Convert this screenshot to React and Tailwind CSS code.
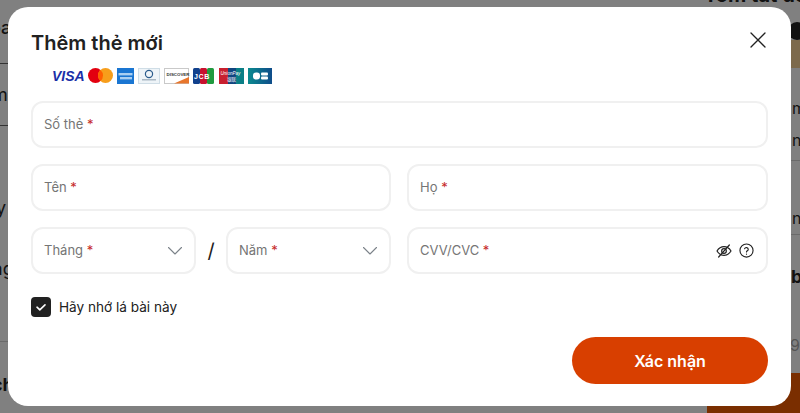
import React from 'react'

function Star() {
    return <span className="text-[#c62828]">*</span>
}

function Chevron() {
    return (
        <svg className="w-[14px] h-[14px] text-[#7b8289]" viewBox="0 0 14 14" fill="none" stroke="currentColor" strokeWidth="1.1">
            <path d="M0.5 3.5l6.5 6.5 6.5-6.5" strokeLinecap="round" strokeLinejoin="round" />
        </svg>
    )
}

function Field({ label, className = '', children }) {
    return (
        <div className={`h-[47px] flex items-center justify-between pl-[11px] pr-3 bg-white border-2 border-[#f0f0f0] rounded-xl text-[13px] text-[#757575] ${className}`}>
            <span>{label} <Star /></span>
            {children}
        </div>
    )
}

function CardLogos() {
    return (
        <div className="flex items-center h-4 ml-[21px] mt-3">
            <svg width="241" height="16" viewBox="0 0 241 16">
                <text x="0" y="12.5" fontFamily="Liberation Sans, sans-serif" fontSize="14" fontWeight="700" fontStyle="italic" fill="#1a2fa8">VISA</text>
                <circle cx="43.5" cy="7.5" r="7.5" fill="#e3000f" />
                <circle cx="53.5" cy="7.5" r="7.5" fill="#f79e1b" />
                <path d="M48.5 1.9a7.5 7.5 0 0 1 0 11.2a7.5 7.5 0 0 1 0-11.2z" fill="#ff5f00" />

                <rect x="65" y="0" width="17" height="16" fill="#1a76d2" />
                <rect x="66.5" y="5" width="14" height="2.4" fill="#a9cff2" />
                <rect x="68" y="9" width="12" height="2.4" fill="#a9cff2" />

                <rect x="86.5" y="0.5" width="21" height="15" fill="#eef4f8" stroke="#cfdde6" />
                <circle cx="97" cy="6" r="3.6" fill="none" stroke="#2a5b8c" strokeWidth="1.2" />
                <rect x="90" y="11" width="14" height="1.5" fill="#a9b8c4" />

                <rect x="112.5" y="0.5" width="24" height="15" fill="#ffffff" stroke="#c9c9c9" />
                <text x="114.5" y="7.5" fontFamily="Liberation Sans, sans-serif" fontSize="4.4" fontWeight="700" fill="#333333">DISCOVER</text>
                <path d="M122 15.5L137 9v6.5z" fill="#e8762c" />

                <rect x="141" y="0" width="7" height="16" rx="1.5" fill="#11408c" />
                <rect x="148" y="0" width="7" height="16" rx="1.5" fill="#c8102e" />
                <rect x="155" y="0" width="7" height="16" rx="1.5" fill="#1f9a3f" />
                <text x="142" y="11" fontFamily="Liberation Sans, sans-serif" fontSize="7" fontWeight="700" fill="#ffffff" letterSpacing="0.6">JCB</text>

                <path d="M167 0h9v16h-9z" fill="#c8202f" />
                <path d="M176 0h8v16h-8z" fill="#10457f" />
                <path d="M184 0h8v16h-8z" fill="#0a7f86" />
                <text x="168.5" y="7" fontFamily="Liberation Sans, sans-serif" fontSize="4.6" fontStyle="italic" fill="#ffffff">UnionPay</text>
                <text x="175" y="13" fontFamily="Noto Sans CJK SC, sans-serif" fontSize="4.6" fill="#ffffff">银联</text>

                <defs>
                    <linearGradient id="cb" x1="0" y1="0" x2="1" y2="0">
                        <stop offset="0" stopColor="#0b8a8f" />
                        <stop offset="1" stopColor="#0f4c8a" />
                    </linearGradient>
                </defs>
                <rect x="196" y="0" width="24" height="16" fill="url(#cb)" />
                <rect x="201" y="4.5" width="7" height="7" rx="3" fill="#ffffff" />
                <rect x="209" y="4.5" width="7" height="3" rx="1" fill="#ffffff" />
                <rect x="209" y="8.5" width="7" height="3" rx="1" fill="#ffffff" />
            </svg>
        </div>
    )
}

// what shows of the checkout page behind the dimmed backdrop
function PageBehind() {
    return (
        <div className="h-full bg-[#808080] overflow-hidden flex justify-between text-[#111111] text-lg">
            <div className="w-2 flex flex-col whitespace-nowrap">
                <div className="h-[64px] flex items-start pt-[14px] border-b border-[#333333] font-medium -ml-2.5">oa</div>
                <div className="h-[62px] flex items-center border-b border-[#333333] -ml-2">m</div>
                <div className="h-[216px] flex flex-col gap-[33px] pt-[68px] border-b border-[#6a6a6a]">
                    <span className="-ml-1">y</span>
                    <span className="-ml-2">ng</span>
                </div>
                <div className="pt-[29px] font-bold -ml-2">ch</div>
            </div>

            <div className="w-[96px] flex flex-col whitespace-nowrap">
                <div className="h-[8px] flex items-end font-bold text-xl leading-[26px]">Tóm tắt đơn</div>
                <div className="h-[60px] pl-[84px] pt-[14px]">
                    <div className="w-[18px] h-[18px] rounded-full bg-[#111111]" />
                    <div className="w-3 h-[28px] bg-[#7d6a4c]" />
                </div>
                <div className="h-[93px] pl-[88px] pt-[24px] text-base leading-[32px] border-b border-[#6a6a6a] flex flex-col">
                    <span>m</span>
                    <span>n</span>
                </div>
                <div className="h-[74px] pl-[88px] pt-[45px] text-base border-b border-[#6a6a6a]">n</div>
                <div className="h-[69px] pl-[87px] pt-[28px] font-bold">b</div>
                <div className="h-[69px] pl-[86px] pt-[29px] text-base text-[#555555]">99</div>
                <div className="flex-1 ml-[3px] rounded-tl-lg bg-[#7a2e00]" />
            </div>
        </div>
    )
}

export default function App() {
    return (
        <div className="relative w-[800px] h-[413px] overflow-hidden font-['Inter',sans-serif]">
            <PageBehind />
            <div className="absolute inset-0 pl-2 pr-[9px] py-[7px]">
                <div className="relative h-full bg-white rounded-[20px] pl-[23px] pr-[23px] pt-[23px]">
                    <h2 className="text-xl leading-[26px] font-semibold text-[#212121]">Thêm thẻ mới</h2>
                    <button className="absolute right-[25px] top-[25px] text-[#212121]">
                        <svg className="w-4 h-4 block" viewBox="0 0 16 16" fill="none" stroke="currentColor" strokeWidth="1.3">
                            <path d="M1 1l14 14M15 1L1 15" strokeLinecap="round" />
                        </svg>
                    </button>

                    <CardLogos />

                    <div className="mt-[17px] flex flex-col gap-4">
                        <Field label="Số thẻ" />
                        <div className="grid grid-cols-[360px_1fr] gap-4">
                            <Field label="Tên" />
                            <Field label="Họ" />
                        </div>
                        <div className="grid grid-cols-[360px_1fr] gap-4">
                            <div className="flex items-center">
                                <Field label="Tháng" className="flex-1"><Chevron /></Field>
                                <span className="w-[30px] text-center text-xl text-[#212121]">/</span>
                                <Field label="Năm" className="flex-1"><Chevron /></Field>
                            </div>
                            <Field label="CVV/CVC">
                                <div className="flex items-center gap-[7px] text-[#212121]">
                                    <svg className="w-4 h-4" viewBox="0 0 24 24" fill="none" stroke="currentColor" strokeWidth="1.8" strokeLinecap="round" strokeLinejoin="round">
                                        <path d="M1.5 12S5.5 5.5 12 5.5 22.5 12 22.5 12 18.5 18.5 12 18.5 1.5 12 1.5 12z" />
                                        <circle cx="12" cy="12" r="3.5" />
                                        <path d="M4 21L20 3" />
                                    </svg>
                                    <svg className="w-[15px] h-[15px]" viewBox="0 0 24 24" fill="none" stroke="currentColor" strokeWidth="1.8" strokeLinecap="round" strokeLinejoin="round">
                                        <circle cx="12" cy="12" r="10.5" />
                                        <path d="M9 9.2a3 3 0 0 1 5.8 1c0 2-2.8 2.4-2.8 4" />
                                        <path d="M12 17.6v.2" />
                                    </svg>
                                </div>
                            </Field>
                        </div>
                    </div>

                    <label className="mt-[23px] flex items-center gap-2 text-[13.6px] text-[#212121]">
                        <span className="w-5 h-5 flex items-center justify-center rounded bg-[#212121]">
                            <svg className="w-3 h-3" viewBox="0 0 12 12" fill="none" stroke="#ffffff" strokeWidth="1.6" strokeLinecap="round" strokeLinejoin="round">
                                <path d="M2 6.2l2.8 2.6 5.2-5" />
                            </svg>
                        </span>
                        Hãy nhớ lá bài này
                    </label>

                    <div className="mt-5 flex justify-end">
                        <button className="w-[196px] h-[47px] rounded-full bg-[#d83f00] text-white text-base font-semibold">Xác nhận</button>
                    </div>
                </div>
            </div>
        </div>
    )
}
